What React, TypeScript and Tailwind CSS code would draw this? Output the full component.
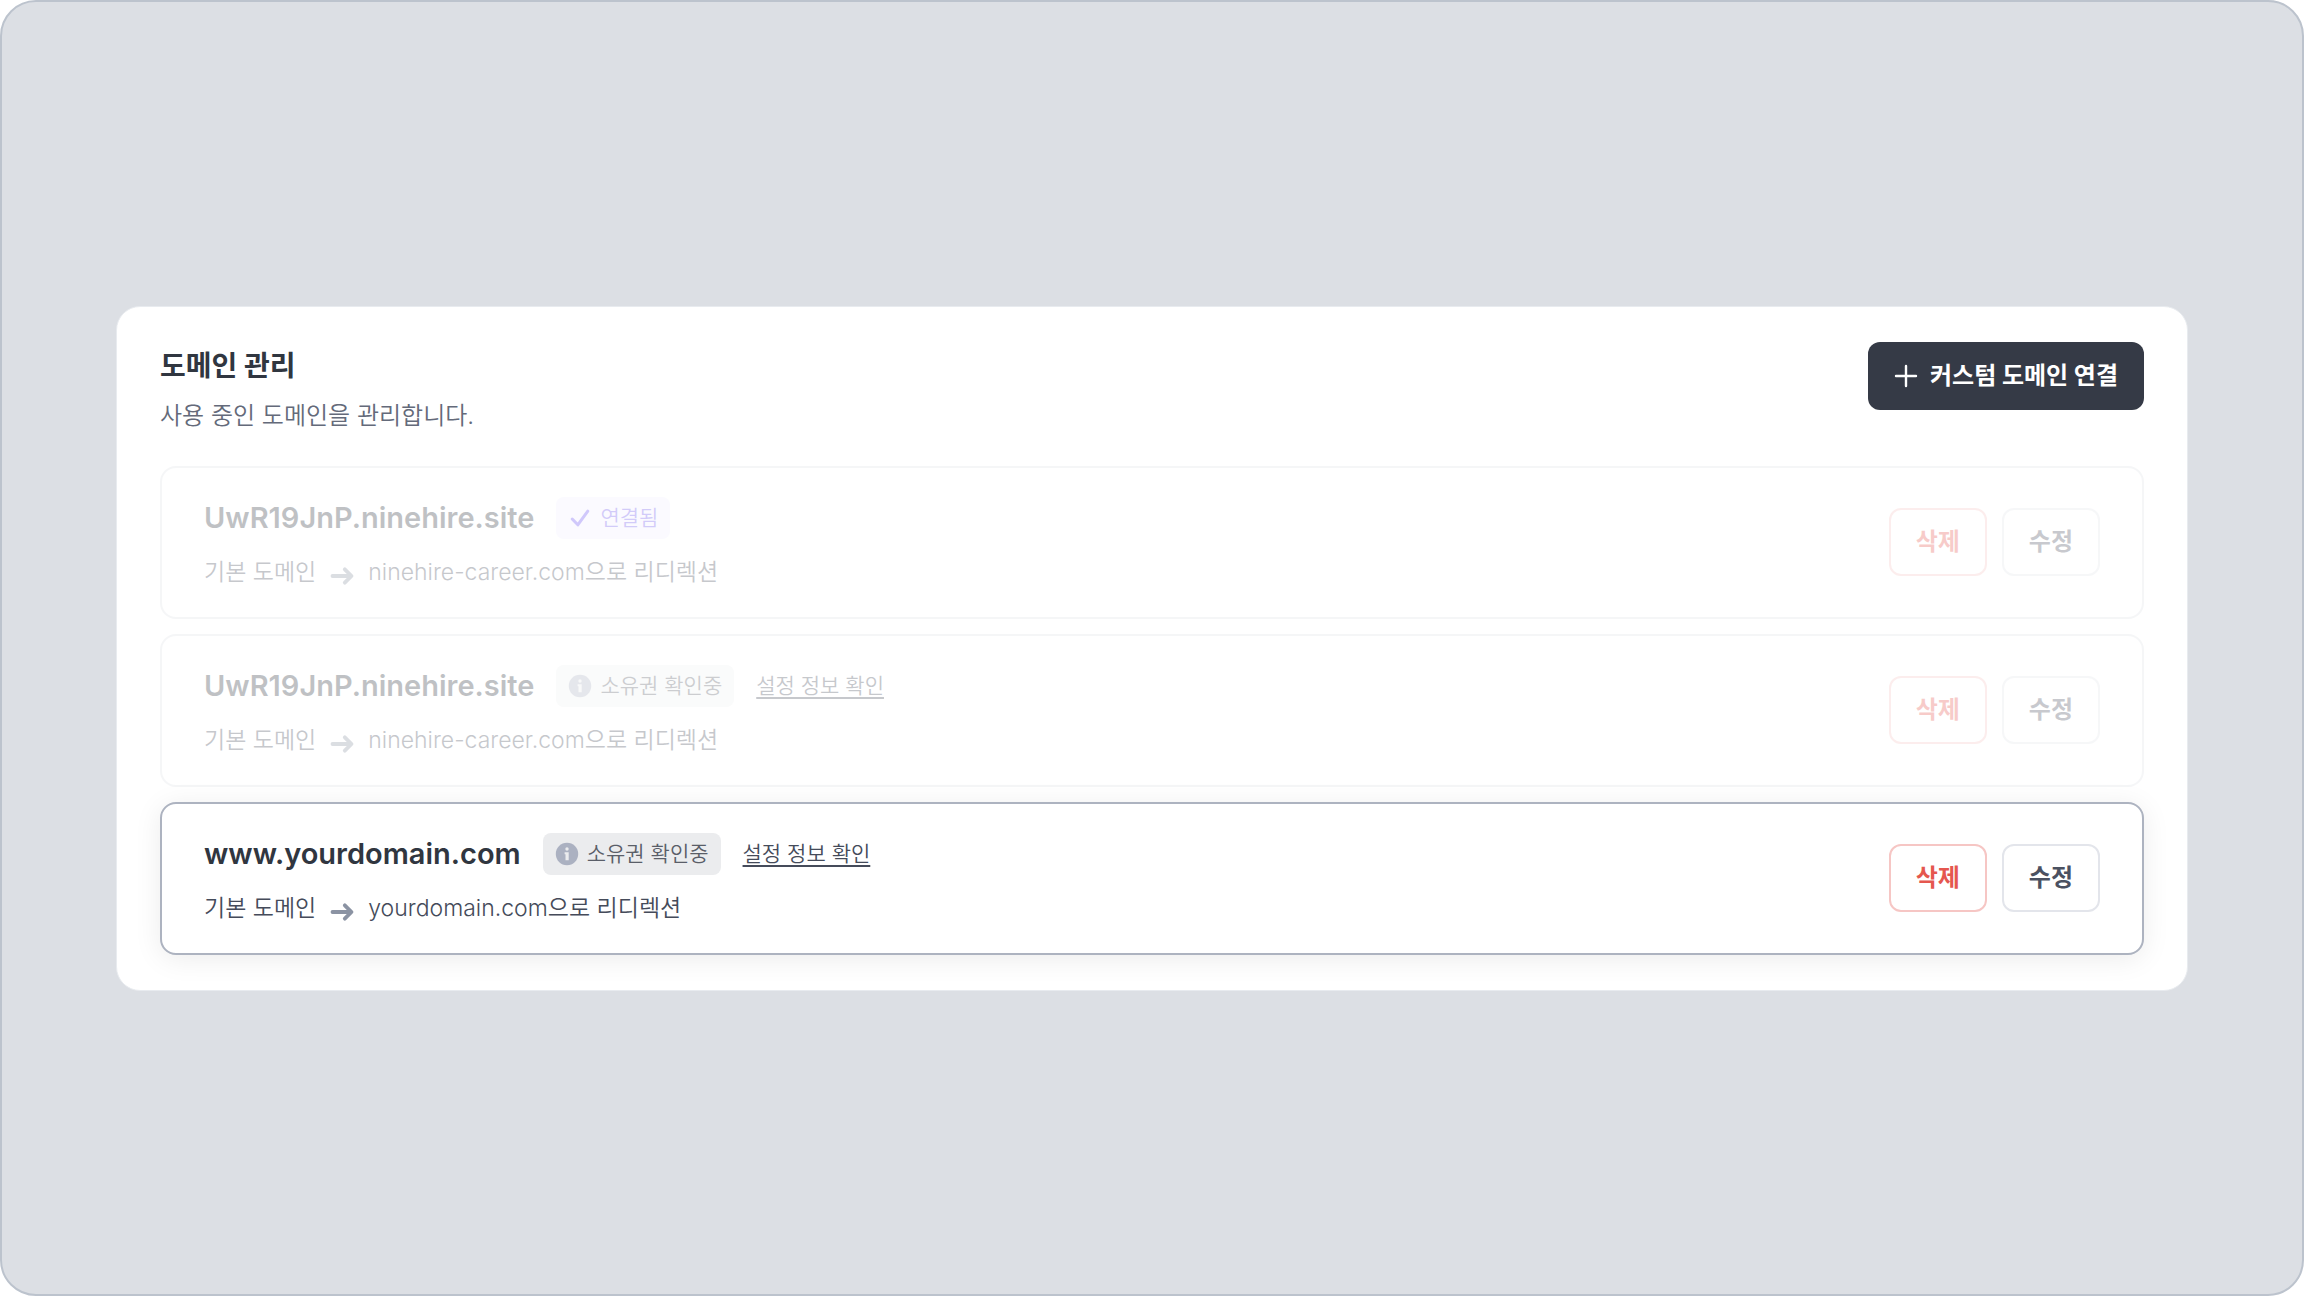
import type { ReactNode } from "react";

type Domain = {
    name: string;
    redirect: string;
    status: "connected" | "verifying";
    active: boolean;
};

const domains: Domain[] = [
    { name: "UwR19JnP.ninehire.site", redirect: "ninehire-career.com", status: "connected", active: false },
    { name: "UwR19JnP.ninehire.site", redirect: "ninehire-career.com", status: "verifying", active: false },
    { name: "www.yourdomain.com", redirect: "yourdomain.com", status: "verifying", active: true },
];

function PlusIcon() {
    return (
        <svg className="size-6" viewBox="0 0 24 24" fill="none" stroke="currentColor" strokeWidth="2.4" strokeLinecap="round" aria-hidden="true">
            <path d="M12 2v20M2 12h20" />
        </svg>
    );
}

function ArrowIcon() {
    return (
        <svg className="mt-2 size-7 text-[#8b93a3]" viewBox="0 0 28 28" fill="none" stroke="currentColor" strokeWidth="3.8" strokeLinecap="round" strokeLinejoin="round" aria-hidden="true">
            <path d="M4.5 14H23M16.8 7.3L23.5 14L16.8 20.7" />
        </svg>
    );
}

function CheckIcon() {
    return (
        <svg className="size-6" viewBox="0 0 24 24" fill="none" stroke="#664bf5" strokeWidth="3" strokeLinecap="round" strokeLinejoin="round" aria-hidden="true">
            <path d="M4.2 13L9.8 18.8L19.8 5.2" />
        </svg>
    );
}

function InfoIcon() {
    return (
        <svg className="size-6" viewBox="0 0 24 24" aria-hidden="true">
            <circle cx="12" cy="12" r="11.2" fill="#abb1c1" />
            <circle cx="12" cy="7" r="1.7" fill="#ebecee" />
            <path d="M9.6 10.2h4.1v8h-3.2v-6h-.9z" fill="#ebecee" />
        </svg>
    );
}

function Badge({ status, active }: { status: Domain["status"]; active: boolean }) {
    if (status === "connected") {
        return (
            <span className="flex h-[42px] items-center gap-2 rounded-lg bg-[#f2f0ff] px-3 text-[21px] font-[350] text-[#6d55ee]">
                <CheckIcon />
                연결됨
            </span>
        );
    }
    return (
        <span className={`flex h-[42px] items-center gap-2 rounded-lg px-3 text-[21px] font-[350] text-[#5a5e68] ${active ? "bg-[#ebecee]" : "bg-[#eff2f2]"}`}>
            <InfoIcon />
            소유권 확인중
        </span>
    );
}

function RowButton({ children, className }: { children: ReactNode; className: string }) {
    return (
        <button type="button" className={`h-[68px] rounded-xl border-2 bg-white px-[25px] text-2xl font-bold ${className}`}>
            {children}
        </button>
    );
}

function DomainRow({ domain }: { domain: Domain }) {
    return (
        <li
            className={`flex items-center justify-between rounded-2xl border-2 bg-white px-[42px] py-[29px] ${
                domain.active ? "relative border-[#adb3c0] shadow-[0_4px_28px_rgba(0,0,0,0.08)]" : "border-[#e0e3e8] opacity-30"
            }`}
        >
            <div className="flex flex-col gap-[17px]">
                <div className="flex items-center gap-[22px]">
                    <h2 className="text-[29px] leading-9 font-semibold text-[#303640]">{domain.name}</h2>
                    <Badge status={domain.status} active={domain.active} />
                    {domain.status === "verifying" && (
                        <a href="#" className="text-[21px] leading-8 font-[350] text-[#454b5a] underline decoration-2 underline-offset-4">
                            설정 정보 확인
                        </a>
                    )}
                </div>
                <div className="flex h-8 items-center gap-3 text-[23px] leading-8 font-[350] text-[#454b5a]">
                    <span>기본 도메인</span>
                    <ArrowIcon />
                    <span>{domain.redirect}으로 리디렉션</span>
                </div>
            </div>
            <div className="flex gap-[15px]">
                <RowButton className="border-[#f6c6c4] text-[#e5574f]">삭제</RowButton>
                <RowButton className="border-[#e3e5eb] text-[#4b5161]">수정</RowButton>
            </div>
        </li>
    );
}

export default function App() {
    return (
        <div className="min-h-screen bg-white font-[Inter,'Noto_Sans_CJK_KR',sans-serif]">
            <main className="flex min-h-screen flex-col justify-center rounded-[36px] border-2 border-[#bcc3cd] bg-[#dcdfe4] px-[114px]">
                <section className="rounded-3xl border border-[#e8ebef] bg-white px-[43px] py-[35px]">
                    <header className="flex items-start justify-between">
                        <div className="pt-1">
                            <h1 className="text-[28px] leading-10 font-bold text-[#303640]">도메인 관리</h1>
                            <p className="mt-3 text-2xl leading-9 font-[350] text-[#646a7a]">사용 중인 도메인을 관리합니다.</p>
                        </div>
                        <button type="button" className="flex h-[68px] items-center gap-3 rounded-xl bg-[#353a46] px-[26px] text-2xl font-bold text-white">
                            <PlusIcon />
                            커스텀 도메인 연결
                        </button>
                    </header>
                    {/* domain list */}
                    <ul className="mt-8 flex flex-col gap-[15px]">
                        {domains.map((domain, i) => (
                            <DomainRow key={i} domain={domain} />
                        ))}
                    </ul>
                </section>
            </main>
        </div>
    );
}
